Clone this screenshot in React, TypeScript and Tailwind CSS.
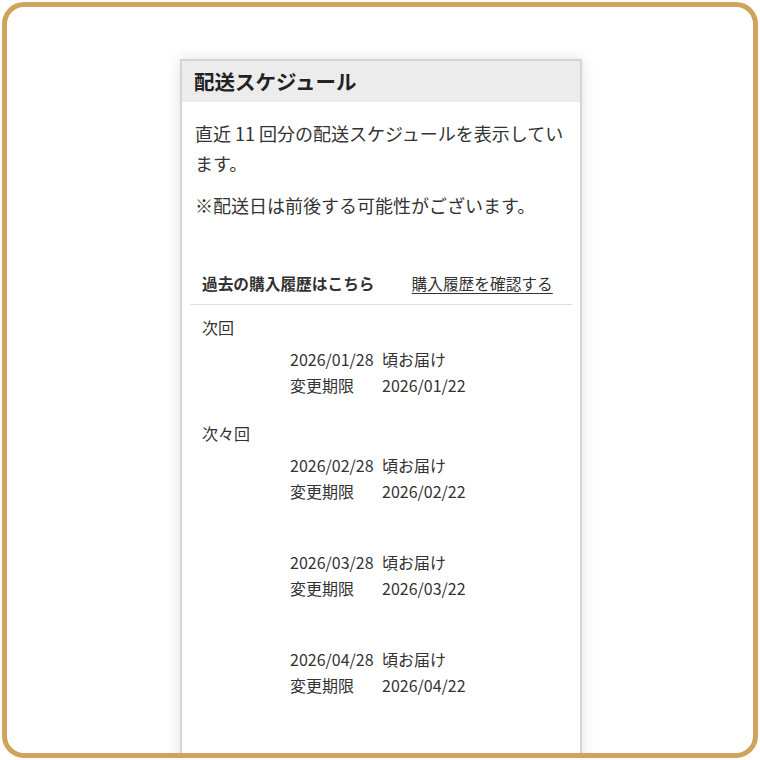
import React from "react";

const groups = [
  { label: "次回", date: "2026/01/28", limit: "2026/01/22" },
  { label: "次々回", date: "2026/02/28", limit: "2026/02/22" },
  { label: "", date: "2026/03/28", limit: "2026/03/22" },
  { label: "", date: "2026/04/28", limit: "2026/04/22" },
];

export default function App() {
  return (
    <div
      className="w-[760px] h-[760px] bg-white p-[2px]"
      style={{ fontFamily: '"Noto Sans CJK JP", "Noto Sans", sans-serif' }}
    >
      <div className="h-full rounded-[22px] border-[5px] border-[#cfa35a] bg-white overflow-hidden pt-[52px] pl-[173px]">
        <div className="w-[402px] h-[720px] border-2 border-[#d4d4d4] bg-white shadow-[0_0_14px_rgba(0,0,0,0.12)]">
          <div className="h-[41px] bg-[#ececec] flex items-center px-[12px]">
            <h1 className="text-[20.5px] font-bold text-[#222] leading-none">配送スケジュール</h1>
          </div>
          <div className="px-[13px] pt-[16px] text-[#333]">
            <p className="text-[18px] leading-[30px]">直近 11 回分の配送スケジュールを表示しています。</p>
            <p className="text-[18px] leading-[30px] mt-[12px]">※配送日は前後する可能性がございます。</p>
          </div>
          <div className="mx-[8px] mt-[52px]">
            <div className="flex items-center gap-[37px] px-[12px] pb-[8px] border-b border-[#dedede] text-[15.7px] leading-[24px] text-[#333]">
              <span className="font-bold">過去の購入履歴はこちら</span>
              <a className="underline underline-offset-[3px]">購入履歴を確認する</a>
            </div>
            <div className="px-[12px] pt-[10px] text-[#333] text-[16px]">
              {groups.map((g, i) => (
                <div key={i} className={i === 0 ? "" : g.label ? "mt-[23px]" : "mt-[45px]"}>
                  {g.label ? (
                    <div className="leading-[24px] h-[24px]">{g.label}</div>
                  ) : null}
                  <div className={`grid grid-cols-[92px_auto] leading-[26px] pl-[88px] ${g.label ? "mt-[7px]" : ""}`}>
                    <span>{g.date}</span>
                    <span>頃お届け</span>
                    <span>変更期限</span>
                    <span>{g.limit}</span>
                  </div>
                </div>
              ))}
            </div>
          </div>
        </div>
      </div>
    </div>
  );
}
